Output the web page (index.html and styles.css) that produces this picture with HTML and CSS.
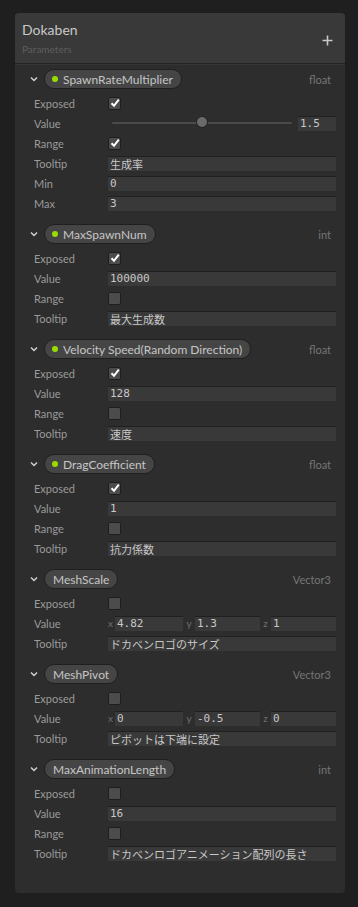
FILE: index.html
```html
<!DOCTYPE html>
<html lang="ja">
<head>
<meta charset="utf-8">
<link rel="stylesheet" href="styles.css">
</head>
<body>
<div class="panel">
  <div class="head">
    <div class="titles">
      <div class="title">Dokaben</div>
      <div class="sub">Parameters</div>
    </div>
    <svg class="plus" width="11" height="11" viewBox="0 0 11 11"><path d="M5.5 0.5V10.5M0.5 5.5H10.5" stroke="#c8c8c8" stroke-width="1.6"/></svg>
  </div>
  <div class="body">

    <section class="param">
      <div class="phead">
        <svg class="chev" width="8" height="6" viewBox="0 0 8 6"><path d="M1 1.5L4 4.5L7 1.5" fill="none" stroke="#d0d0d0" stroke-width="1.5"/></svg>
        <span class="pill"><i class="dot"></i>SpawnRateMultiplier</span>
        <span class="type">float</span>
      </div>
      <div class="row"><span class="lbl">Exposed</span><span class="cb on"><svg width="12" height="12" viewBox="0 0 12 12"><path d="M2.5 6.2L5 8.8L9.8 2.6" fill="none" stroke="#fff" stroke-width="2"/></svg></span></div>
      <div class="row"><span class="lbl">Value</span>
        <div class="slider"><div class="track"><span class="thumb"></span></div><span class="field num short">1.5</span></div>
      </div>
      <div class="row"><span class="lbl">Range</span><span class="cb on"><svg width="12" height="12" viewBox="0 0 12 12"><path d="M2.5 6.2L5 8.8L9.8 2.6" fill="none" stroke="#fff" stroke-width="2"/></svg></span></div>
      <div class="row"><span class="lbl">Tooltip</span><span class="field">生成率</span></div>
      <div class="row"><span class="lbl">Min</span><span class="field num">0</span></div>
      <div class="row"><span class="lbl">Max</span><span class="field num">3</span></div>
    </section>

    <section class="param">
      <div class="phead">
        <svg class="chev" width="8" height="6" viewBox="0 0 8 6"><path d="M1 1.5L4 4.5L7 1.5" fill="none" stroke="#d0d0d0" stroke-width="1.5"/></svg>
        <span class="pill"><i class="dot"></i>MaxSpawnNum</span>
        <span class="type">int</span>
      </div>
      <div class="row"><span class="lbl">Exposed</span><span class="cb on"><svg width="12" height="12" viewBox="0 0 12 12"><path d="M2.5 6.2L5 8.8L9.8 2.6" fill="none" stroke="#fff" stroke-width="2"/></svg></span></div>
      <div class="row"><span class="lbl">Value</span><span class="field num">100000</span></div>
      <div class="row"><span class="lbl">Range</span><span class="cb"></span></div>
      <div class="row"><span class="lbl">Tooltip</span><span class="field">最大生成数</span></div>
    </section>

    <section class="param">
      <div class="phead">
        <svg class="chev" width="8" height="6" viewBox="0 0 8 6"><path d="M1 1.5L4 4.5L7 1.5" fill="none" stroke="#d0d0d0" stroke-width="1.5"/></svg>
        <span class="pill"><i class="dot"></i>Velocity Speed(Random Direction)</span>
        <span class="type">float</span>
      </div>
      <div class="row"><span class="lbl">Exposed</span><span class="cb on"><svg width="12" height="12" viewBox="0 0 12 12"><path d="M2.5 6.2L5 8.8L9.8 2.6" fill="none" stroke="#fff" stroke-width="2"/></svg></span></div>
      <div class="row"><span class="lbl">Value</span><span class="field num">128</span></div>
      <div class="row"><span class="lbl">Range</span><span class="cb"></span></div>
      <div class="row"><span class="lbl">Tooltip</span><span class="field">速度</span></div>
    </section>

    <section class="param">
      <div class="phead">
        <svg class="chev" width="8" height="6" viewBox="0 0 8 6"><path d="M1 1.5L4 4.5L7 1.5" fill="none" stroke="#d0d0d0" stroke-width="1.5"/></svg>
        <span class="pill"><i class="dot"></i>DragCoefficient</span>
        <span class="type">float</span>
      </div>
      <div class="row"><span class="lbl">Exposed</span><span class="cb on"><svg width="12" height="12" viewBox="0 0 12 12"><path d="M2.5 6.2L5 8.8L9.8 2.6" fill="none" stroke="#fff" stroke-width="2"/></svg></span></div>
      <div class="row"><span class="lbl">Value</span><span class="field num">1</span></div>
      <div class="row"><span class="lbl">Range</span><span class="cb"></span></div>
      <div class="row"><span class="lbl">Tooltip</span><span class="field">抗力係数</span></div>
    </section>

    <section class="param">
      <div class="phead">
        <svg class="chev" width="8" height="6" viewBox="0 0 8 6"><path d="M1 1.5L4 4.5L7 1.5" fill="none" stroke="#d0d0d0" stroke-width="1.5"/></svg>
        <span class="pill plain">MeshScale</span>
        <span class="type">Vector3</span>
      </div>
      <div class="row"><span class="lbl">Exposed</span><span class="cb"></span></div>
      <div class="row"><span class="lbl">Value</span>
        <div class="vec">
          <span class="axis">x</span><span class="field num">4.82</span>
          <span class="axis">y</span><span class="field num">1.3</span>
          <span class="axis">z</span><span class="field num">1</span>
        </div>
      </div>
      <div class="row"><span class="lbl">Tooltip</span><span class="field">ドカベンロゴのサイズ</span></div>
    </section>

    <section class="param">
      <div class="phead">
        <svg class="chev" width="8" height="6" viewBox="0 0 8 6"><path d="M1 1.5L4 4.5L7 1.5" fill="none" stroke="#d0d0d0" stroke-width="1.5"/></svg>
        <span class="pill plain">MeshPivot</span>
        <span class="type">Vector3</span>
      </div>
      <div class="row"><span class="lbl">Exposed</span><span class="cb"></span></div>
      <div class="row"><span class="lbl">Value</span>
        <div class="vec">
          <span class="axis">x</span><span class="field num">0</span>
          <span class="axis">y</span><span class="field num">-0.5</span>
          <span class="axis">z</span><span class="field num">0</span>
        </div>
      </div>
      <div class="row"><span class="lbl">Tooltip</span><span class="field">ピボットは下端に設定</span></div>
    </section>

    <section class="param">
      <div class="phead">
        <svg class="chev" width="8" height="6" viewBox="0 0 8 6"><path d="M1 1.5L4 4.5L7 1.5" fill="none" stroke="#d0d0d0" stroke-width="1.5"/></svg>
        <span class="pill plain">MaxAnimationLength</span>
        <span class="type">int</span>
      </div>
      <div class="row"><span class="lbl">Exposed</span><span class="cb"></span></div>
      <div class="row"><span class="lbl">Value</span><span class="field num">16</span></div>
      <div class="row"><span class="lbl">Range</span><span class="cb"></span></div>
      <div class="row"><span class="lbl">Tooltip</span><span class="field">ドカベンロゴアニメーション配列の長さ</span></div>
    </section>

  </div>
</div>
</body>
</html>
```

FILE: styles.css
```css
html, body {
  margin: 0;
  padding: 0;
  background: #1f1f1f;
}
body {
  padding: 13px 13px 0 15px;
  font-family: "Lato", "Noto Sans CJK JP", sans-serif;
  font-size: 11px;
  color: #a4a4a4;
}
.panel {
  width: 330px;
  background: #2d2d2d;
  border-radius: 4px;
  overflow: hidden;
}
.head {
  background: #393939;
  height: 50px;
  display: flex;
  align-items: center;
  justify-content: space-between;
  padding: 0 12px 0 7px;
  border-bottom: 1px solid #242424;
  box-shadow: 0 1px 0 #353535;
}
.titles {
  display: flex;
  flex-direction: column;
}
.title {
  font-size: 14px;
  color: #c8c8c8;
  line-height: 18px;
  margin-top: 0;
}
.sub {
  font-size: 10px;
  color: #5e5e5e;
  line-height: 14px;
  margin-top: 3px;
}
.plus {
  margin-top: 5px;
}
.body {
  padding: 5px 0 30px 0;
}
.param {
  margin-bottom: 11px;
}
.param:last-child {
  margin-bottom: 0;
}
.phead {
  height: 20px;
  display: flex;
  align-items: center;
  padding: 0 14px 0 15px;
  margin-bottom: 4px;
}
.chev {
  margin-right: 6px;
  flex: none;
}
.pill {
  height: 18px;
  border: 1px solid #1f1f1f;
  background: #454545;
  border-radius: 10px;
  display: flex;
  align-items: center;
  padding: 0 8px 0 7px;
  font-size: 12px;
  color: #c6c6c6;
  white-space: nowrap;
}
.pill.plain {
  padding: 0 8px 0 8px;
}
.dot {
  width: 6px;
  height: 6px;
  border-radius: 50%;
  background: #99dd00;
  margin-right: 5px;
  flex: none;
}
.type {
  margin-left: auto;
  color: #767676;
  font-size: 11px;
}
.row {
  height: 20px;
  display: grid;
  grid-template-columns: 74px 1fr;
  align-items: center;
  padding: 0 9px 0 19px;
}
.lbl {
  color: #9a9a9a;
}
.cb {
  width: 11px;
  height: 11px;
  border: 1px solid #1e1e1e;
  border-radius: 2px;
  background: #4c4c4c;
  display: block;
  position: relative;
}
.cb svg {
  position: absolute;
  left: 0;
  top: -1px;
}
.field {
  height: 14px;
  background: #393939;
  border-top: 1px solid #202020;
  display: flex;
  align-items: center;
  padding: 0 2px;
  color: #c8c8c8;
  font-family: "Noto Sans CJK JP", sans-serif;
  font-size: 11px;
  white-space: nowrap;
  overflow: hidden;
  min-width: 0;
}
.field.num {
  font-family: "DejaVu Sans Mono", monospace;
  font-size: 11px;
}
.slider {
  display: flex;
  align-items: center;
}
.track {
  flex: 1;
  height: 2px;
  background: #4a4a4a;
  margin: 0 6px 0 4px;
  border-radius: 1px;
  position: relative;
}
.thumb {
  position: absolute;
  left: 85px;
  top: -5px;
  width: 10px;
  height: 10px;
  border-radius: 50%;
  background: #6a6a6a;
  box-shadow: 0 0 0 1px #252525;
}
.field.short {
  width: 34px;
  flex: none;
}
.vec {
  display: grid;
  grid-template-columns: 7px 68px 12px 1fr 11px 1fr;
  align-items: center;
}
.axis {
  color: #6e6e6e;
  font-size: 10px;
  text-align: center;
}
.axis:first-child {
  text-align: left;
}
```
